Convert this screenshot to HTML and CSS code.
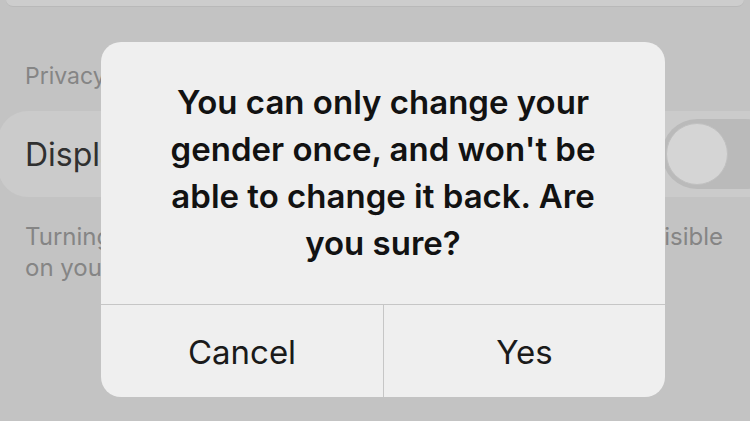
FILE: index.html
```html
<!DOCTYPE html>
<html lang="en">
<head>
<meta charset="utf-8">
<link rel="stylesheet" href="styles.css">
</head>
<body>
<div class="screen">
  <div class="top-card"></div>
  <div class="section-label">Privacy</div>
  <div class="row">
    <span class="row-title">Display gender on profile</span>
    <span class="toggle"><span class="knob"></span></span>
  </div>
  <p class="footnote"><span class="footnote-line">Turning this on will make your gender visible</span>on your profile to other people.</p>

  <div class="alert">
    <div class="alert-message">You can only change your gender once, and won't be able to change it back. Are you sure?</div>
    <div class="alert-actions">
      <div class="alert-btn">Cancel</div>
      <div class="alert-btn">Yes</div>
    </div>
  </div>
</div>
</body>
</html>
```
FILE: styles.css
```css
html, body {
  margin: 0;
  padding: 0;
}
body {
  background: #c3c3c3;
  font-family: "Inter", "Roboto", "Liberation Sans", sans-serif;
}
.screen {
  position: relative;
  width: 750px;
  height: 421px;
  overflow: hidden;
  background: #c3c3c3;
}
.top-card {
  height: 6px;
  margin: 0 6px;
  background: #cdcdcd;
  border-bottom: 1px solid #b9b9b9;
  border-radius: 0 0 16px 16px;
}
.section-label {
  margin-top: 57px;
  padding-left: 25px;
  font-size: 23px;
  line-height: 24px;
  color: #858585;
}
.row {
  display: flex;
  align-items: center;
  justify-content: space-between;
  margin-top: 23px;
  margin-left: -2px;
  width: 800px;
  height: 86px;
  padding-left: 27px;
  box-sizing: border-box;
  background: #cbcbcb;
  border-radius: 30px;
}
.row-title {
  font-size: 32px;
  color: #303030;
  white-space: nowrap;
}
.toggle {
  display: block;
  width: 118px;
  height: 70px;
  margin-right: 18px;
  background: #bababa;
  border-radius: 35px;
  position: relative;
}
.knob {
  position: absolute;
  left: 4px;
  top: 4px;
  width: 60px;
  height: 60px;
  border-radius: 50%;
  background: #d5d5d5;
  border: 1px solid #c0c0c0;
}
.footnote {
  margin: 24px 0 0;
  padding-left: 25px;
  width: 698px;
  font-size: 24px;
  line-height: 31px;
  color: #858585;
}
.footnote-line {
  display: block;
  text-align: justify;
  text-align-last: justify;
}
.alert {
  position: absolute;
  left: 101px;
  top: 42px;
  width: 564px;
  height: 355px;
  background: #efefef;
  border-radius: 20px;
  display: flex;
  flex-direction: column;
  overflow: hidden;
}
.alert-message {
  height: 263px;
  display: flex;
  align-items: center;
  justify-content: center;
  text-align: center;
  padding: 0 55px;
  box-sizing: border-box;
  font-size: 33px;
  font-weight: 600;
  line-height: 47px;
  color: #121212;
  border-bottom: 1px solid #c6c6c6;
}
.alert-actions {
  flex: 1;
  display: grid;
  grid-template-columns: 1fr 1fr;
}
.alert-btn {
  display: flex;
  align-items: center;
  justify-content: center;
  font-size: 33px;
  color: #1a1a1a;
  padding-top: 2px;
}
.alert-btn + .alert-btn {
  border-left: 1px solid #c6c6c6;
}
```
